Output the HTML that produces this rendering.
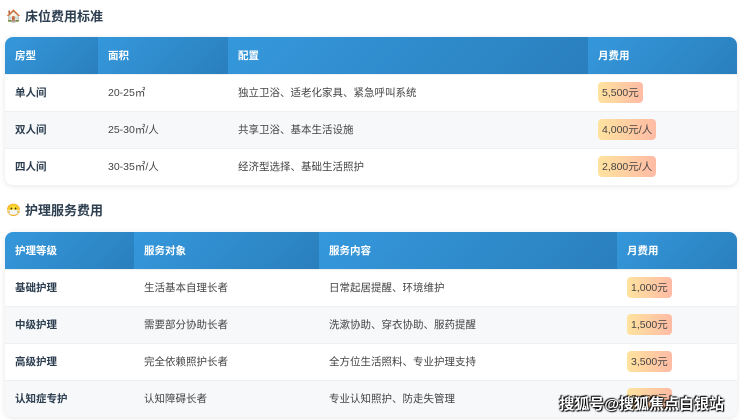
<!DOCTYPE html>
<html><head><meta charset="utf-8"><style>
*{margin:0;padding:0;box-sizing:border-box}
body{width:740px;height:420px;overflow:hidden;background:#fff;font-family:"Liberation Sans","Noto Sans CJK SC",sans-serif;color:#444;position:relative}
.t{position:absolute;left:6px;font-size:13px;font-weight:bold;color:#2c3e50;display:flex;align-items:center;gap:4px}
.card{position:absolute;left:5px;width:732px;border-radius:8px;overflow:hidden;box-shadow:0 1px 6px rgba(0,0,0,.10);background:#fff}
table{border-collapse:collapse;width:100%;font-size:10.5px}
th{height:37px;text-align:left;padding-left:10px;color:#fff;font-weight:bold;background:linear-gradient(135deg,#3598dc,#2a7fbd)}
td{height:37px;padding-left:10px;color:#444}
tr:nth-child(odd) td{background:#f6f8fa}
tr td{border-top:1px solid #eef0f3}
td:first-child{font-weight:bold;color:#2c3e50}
.b{display:inline-block;padding:3px 4px;border-radius:4px;background:linear-gradient(90deg,#ffe39f,#ffbba5);color:#444;font-size:10.5px}
.wm{position:absolute;right:16px;bottom:6px;font-size:15px;font-weight:bold;color:#fff;text-shadow:0 0 2px #000,1px 1px 1px #000,-1px -1px 1px #000}
</style></head><body>
<div class="t" style="top:6px"><span style="font-size:12px">🏠</span>床位费用标准</div>
<div class="card" style="top:37px">
<table>
<tr><th style="width:93px">房型</th><th style="width:130px">面积</th><th style="width:360px">配置</th><th>月费用</th></tr>
<tr><td>单人间</td><td>20-25㎡</td><td>独立卫浴、适老化家具、紧急呼叫系统</td><td><span class="b">5,500元</span></td></tr>
<tr><td>双人间</td><td>25-30㎡/人</td><td>共享卫浴、基本生活设施</td><td><span class="b">4,000元/人</span></td></tr>
<tr><td>四人间</td><td>30-35㎡/人</td><td>经济型选择、基础生活照护</td><td><span class="b">2,800元/人</span></td></tr>
</table></div>
<div class="t" style="top:200px"><span style="font-size:12px">😷</span>护理服务费用</div>
<div class="card" style="top:232px">
<table>
<tr><th style="width:129px">护理等级</th><th style="width:185px">服务对象</th><th style="width:298px">服务内容</th><th>月费用</th></tr>
<tr><td>基础护理</td><td>生活基本自理长者</td><td>日常起居提醒、环境维护</td><td><span class="b">1,000元</span></td></tr>
<tr><td>中级护理</td><td>需要部分协助长者</td><td>洗漱协助、穿衣协助、服药提醒</td><td><span class="b">1,500元</span></td></tr>
<tr><td>高级护理</td><td>完全依赖照护长者</td><td>全方位生活照料、专业护理支持</td><td><span class="b">3,500元</span></td></tr>
<tr><td>认知症专护</td><td>认知障碍长者</td><td>专业认知照护、防走失管理</td><td><span class="b">5,000元</span></td></tr>
</table></div>
<div class="wm">搜狐号@搜狐焦点白银站</div>
</body></html>
